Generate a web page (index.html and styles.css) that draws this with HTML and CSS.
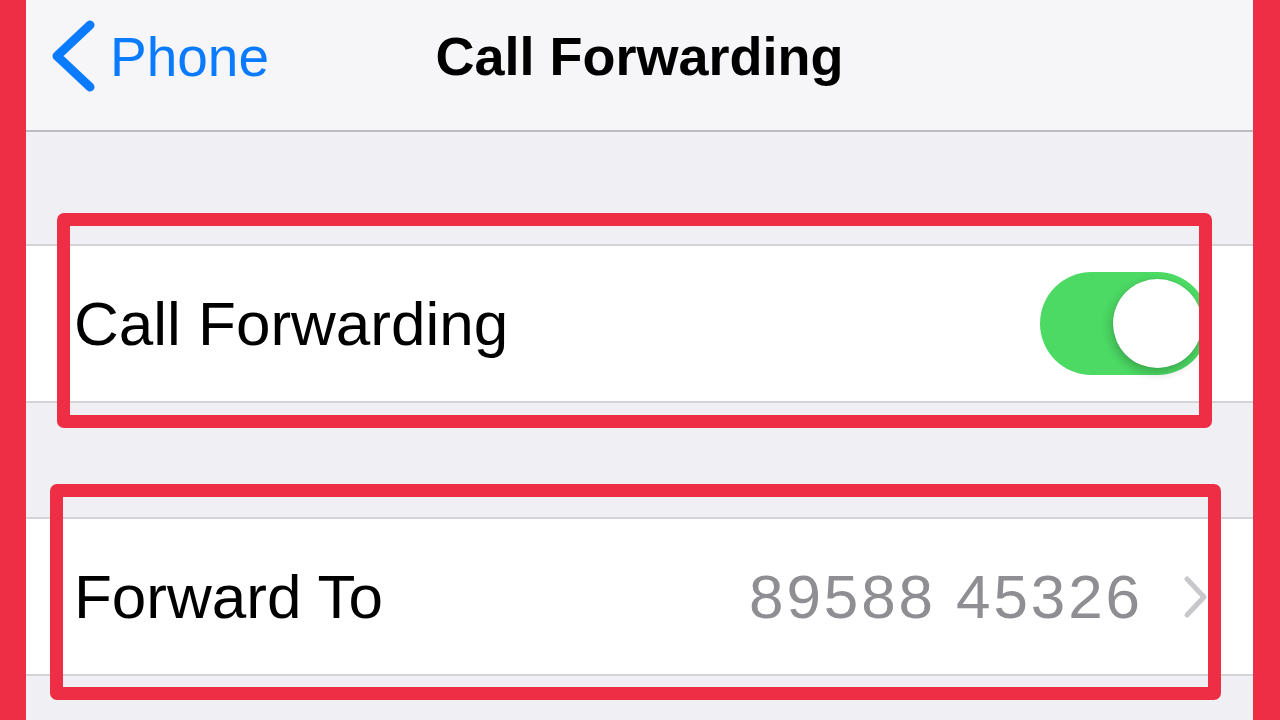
FILE: index.html
```html
<!DOCTYPE html>
<html lang="en">
<head>
    <meta charset="UTF-8">
    <meta name="viewport" content="width=device-width, initial-scale=1.0">
    <title>Call Forwarding</title>
    <link rel="stylesheet" href="styles.css">
</head>
<body>
    <div class="device">
        <div class="screen">
            <header class="nav-bar">
                <a class="back-link" href="#">
                    <svg class="back-chevron" width="44" height="72" viewBox="0 0 44 72">
                        <path d="M38 5 L5 36 L38 67" fill="none" stroke="#0a7aff" stroke-width="9" stroke-linecap="round" stroke-linejoin="round"/>
                    </svg>
                    <span>Phone</span>
                </a>
                <h1 class="nav-title">Call Forwarding</h1>
                <span></span>
            </header>

            <section class="group group-switch">
                <div class="cell">
                    <span class="cell-label">Call Forwarding</span>
                    <span class="switch is-on"><span class="switch-knob"></span></span>
                </div>
            </section>

            <section class="group group-forward">
                <div class="cell">
                    <span class="cell-label">Forward To</span>
                    <span class="cell-value">89588 45326</span>
                    <svg class="cell-chevron" width="26" height="44" viewBox="0 0 26 44">
                        <path d="M4 4 L21 22 L4 40" fill="none" stroke="#c7c7cc" stroke-width="5" stroke-linecap="round" stroke-linejoin="round"/>
                    </svg>
                </div>
            </section>
        </div>

        <!-- highlight boxes drawn over the screenshot -->
        <div class="mark mark-switch"></div>
        <div class="mark mark-forward"></div>
    </div>
</body>
</html>
```

FILE: styles.css
```css
body {
    margin: 0;
    padding: 0;
    background: #ee2e45;
    font-family: "Liberation Sans", Arial, sans-serif;
}

.device {
    position: relative;
    width: 1280px;
    height: 720px;
    overflow: hidden;
}

.screen {
    margin: 0 27px 0 26px;
    height: 720px;
    background: #efeff4;
    overflow: hidden;
}

.nav-bar {
    display: grid;
    grid-template-columns: 1fr auto 1fr;
    align-items: center;
    height: 132px;
    padding: 0 0 18px 0;
    box-sizing: border-box;
    background: #f6f6f8;
    border-bottom: 2px solid #bcbcc0;
}

.back-link {
    display: flex;
    align-items: center;
    gap: 14px;
    padding-left: 26px;
    color: #0a7aff;
    text-decoration: none;
    font-size: 55px;
}

.back-link span {
    margin-top: 2px;
}

.nav-title {
    margin: 0;
    font-size: 54px;
    font-weight: 700;
    color: #000;
}

.group {
    background: #fff;
    border-top: 2px solid #d3d3d8;
    border-bottom: 2px solid #d3d3d8;
}

.group-switch {
    margin-top: 112px;
}

.group-forward {
    margin-top: 114px;
}

.cell {
    display: flex;
    align-items: center;
    height: 155px;
    padding: 0 44px 0 48px;
}

.cell-label {
    flex: 1;
    font-size: 62px;
    color: #000;
}

.cell-value {
    font-size: 62px;
    letter-spacing: 2.9px;
    color: #8e8e93;
    margin-right: 40px;
}

.switch {
    position: relative;
    display: block;
    width: 169px;
    height: 103px;
    border-radius: 52px;
    background: #4cd964;
}

.switch-knob {
    position: absolute;
    top: 7px;
    right: 7px;
    width: 89px;
    height: 89px;
    border-radius: 50%;
    background: #fff;
    box-shadow: 0 6px 10px rgba(0, 0, 0, 0.16), 0 0 0 1px rgba(0, 0, 0, 0.04), -6px 2px 10px rgba(0, 0, 0, 0.06);
}

.mark {
    position: absolute;
    border: 13px solid #ee2e45;
    border-radius: 7px;
    box-sizing: border-box;
}

.mark-switch {
    left: 57px;
    top: 213px;
    width: 1155px;
    height: 215px;
}

.mark-forward {
    left: 50px;
    top: 484px;
    width: 1171px;
    height: 216px;
}
```
